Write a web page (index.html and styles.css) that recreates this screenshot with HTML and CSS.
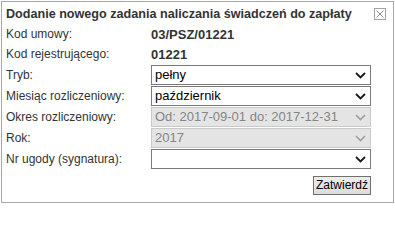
FILE: index.html
```html
<!DOCTYPE html>
<html lang="pl">
<head>
<meta charset="utf-8">
<title>Dodanie nowego zadania</title>
<link rel="stylesheet" href="styles.css">
</head>
<body>
<div class="dialog">
  <div class="title-bar">
    <span class="title">Dodanie nowego zadania naliczania świadczeń do zapłaty</span>
    <svg class="close" width="12" height="12" viewBox="0 0 12 12" aria-label="Zamknij">
      <rect x="0.5" y="0.5" width="11" height="11" fill="#fff" stroke="#a3a3a3"/>
      <path d="M2.5 2.5 L9.5 9.5 M9.5 2.5 L2.5 9.5" stroke="#8c8c8c" stroke-width="1" fill="none"/>
    </svg>
  </div>
  <div class="form">
    <div class="row info first">
      <span class="label">Kod umowy:</span>
      <span class="value">03/PSZ/01221</span>
    </div>
    <div class="row info">
      <span class="label">Kod rejestrującego:</span>
      <span class="value">01221</span>
    </div>
    <div class="row">
      <span class="label">Tryb:</span>
      <div class="select-wrap">
        <select class="select"><option>pełny</option></select>
        <svg class="chev" width="11" height="7" viewBox="0 0 11 7"><path d="M1 1 L5.5 5.5 L10 1" fill="none" stroke="#1a1a1a" stroke-width="1.8"/></svg>
      </div>
    </div>
    <div class="row">
      <span class="label">Miesiąc rozliczeniowy:</span>
      <div class="select-wrap">
        <select class="select"><option>październik</option></select>
        <svg class="chev" width="11" height="7" viewBox="0 0 11 7"><path d="M1 1 L5.5 5.5 L10 1" fill="none" stroke="#1a1a1a" stroke-width="1.8"/></svg>
      </div>
    </div>
    <div class="row">
      <span class="label">Okres rozliczeniowy:</span>
      <div class="select-wrap">
        <select class="select" disabled><option>Od: 2017-09-01 do: 2017-12-31</option></select>
        <svg class="chev" width="11" height="7" viewBox="0 0 11 7"><path d="M1 1 L5.5 5.5 L10 1" fill="none" stroke="#a0a0a0" stroke-width="1.6"/></svg>
      </div>
    </div>
    <div class="row">
      <span class="label">Rok:</span>
      <div class="select-wrap">
        <select class="select" disabled><option>2017</option></select>
        <svg class="chev" width="11" height="7" viewBox="0 0 11 7"><path d="M1 1 L5.5 5.5 L10 1" fill="none" stroke="#a0a0a0" stroke-width="1.6"/></svg>
      </div>
    </div>
    <div class="row">
      <span class="label">Nr ugody (sygnatura):</span>
      <div class="select-wrap">
        <select class="select"><option></option></select>
        <svg class="chev" width="11" height="7" viewBox="0 0 11 7"><path d="M1 1 L5.5 5.5 L10 1" fill="none" stroke="#1a1a1a" stroke-width="1.8"/></svg>
      </div>
    </div>
    <div class="actions">
      <button class="btn" type="button">Zatwierdź</button>
    </div>
  </div>
</div>
</body>
</html>
```
FILE: styles.css
```css
html, body {
  margin: 0;
  padding: 0;
  background: #fff;
}

body {
  font-family: "Liberation Sans", Arial, sans-serif;
  color: #333;
}

.dialog {
  box-sizing: border-box;
  width: 393px;
  height: 202px;
  margin: 1px;
  border: 1px solid #a9a9a9;
  background: #fff;
}

.title-bar {
  display: flex;
  justify-content: space-between;
  align-items: center;
  height: 20px;
  padding: 2px 7px 0 4px;
}

.title {
  font-weight: bold;
  font-size: 12.6px;
  color: #333;
  line-height: 20px;
}

.close {
  display: block;
  margin-top: 0;
}

.form {
  padding: 0 22px 0 4px;
}

.row {
  display: flex;
  align-items: center;
  height: 20px;
  margin-top: 1px;
}

.row.info {
  margin-top: 0;
}

.label {
  width: 145px;
  flex: none;
  font-size: 12px;
  color: #333;
}

.value {
  font-weight: bold;
  font-size: 13px;
  color: #333;
}

.select-wrap {
  position: relative;
  width: 220px;
  height: 20px;
}

.select {
  -webkit-appearance: none;
  appearance: none;
  box-sizing: border-box;
  width: 220px;
  height: 20px;
  margin: 0;
  padding: 0 20px 0 3px;
  border: 1px solid #7a7a7a;
  border-radius: 0;
  background: #fff;
  font-family: "Liberation Sans", Arial, sans-serif;
  font-size: 13px;
  color: #000;
  line-height: 18px;
}

.select:disabled {
  background: #e4e4e4;
  border-color: #cacaca;
  color: #858585;
  opacity: 1;
}

.chev {
  position: absolute;
  right: 5px;
  top: 7px;
  pointer-events: none;
}

.actions {
  display: flex;
  justify-content: flex-end;
  margin-top: 7px;
}

.btn {
  box-sizing: border-box;
  height: 19px;
  width: 58px;
  margin: 0;
  padding: 0 2px;
  border: 1px solid #707070;
  border-radius: 0;
  background: linear-gradient(#ededed, #dcdcdc);
  font-family: "Liberation Sans", Arial, sans-serif;
  font-size: 12px;
  color: #000;
  line-height: 17px;
}
```
